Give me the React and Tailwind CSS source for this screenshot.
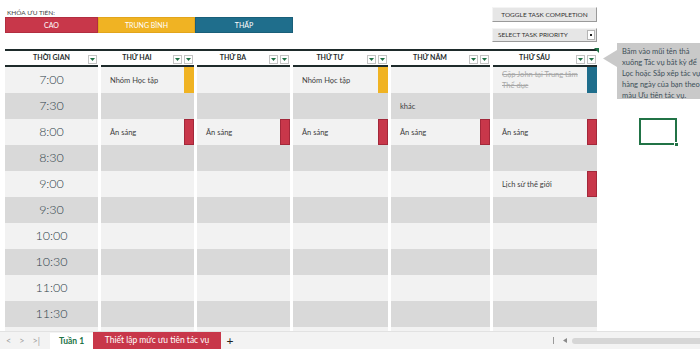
import React from 'react';

const RED = 'bg-[#c8374a]';
const YELLOW = 'bg-[#f0b323]';
const TEAL = 'bg-[#1f6e8c]';

const times = ['7:00', '7:30', '8:00', '8:30', '9:00', '9:30', '10:00', '10:30', '11:00', '11:30'];

const days = [
  { label: 'THỨ HAI', w: 'w-[93px]' },
  { label: 'THỨ BA', w: 'w-[93px]' },
  { label: 'THỨ TƯ', w: 'w-[95px]' },
  { label: 'THỨ NĂM', w: 'w-[99px]' },
  { label: 'THỨ SÁU', w: 'w-[104px]' },
];

// row-day -> task
const tasks = {
  '0-0': { text: 'Nhóm Học tập', bar: YELLOW },
  '0-2': { text: 'Nhóm Học tập', bar: YELLOW },
  '0-4': { text: 'Gặp John tại Trung tâm\nThể dục', bar: TEAL, done: true },
  '1-3': { text: 'khác' },
  '2-0': { text: 'Ăn sáng', bar: RED },
  '2-1': { text: 'Ăn sáng', bar: RED },
  '2-2': { text: 'Ăn sáng', bar: RED },
  '2-3': { text: 'Ăn sáng', bar: RED },
  '2-4': { text: 'Ăn sáng', bar: RED },
  '4-4': { text: 'Lịch sử thế giới', bar: RED },
};

const FilterBox = () => (
  <span className="flex h-[9px] w-[9px] items-center justify-center border border-[#c4c4c4] bg-white">
    <svg width="5" height="3" viewBox="0 0 5 3">
      <path d="M0 0h5L2.5 3z" fill="#1e7145" />
    </svg>
  </span>
);

const HeaderCell = ({ label, w, filters = 2, padLeft }) => (
  <div className={`${w} flex h-[16px] items-end border-b-2 border-[#1e2b2b] pb-[1px]`}>
    <span className={`flex-1 self-center text-center text-[7px] font-bold text-[#1e2b2b] ${padLeft ? 'pl-[10px]' : ''}`}>
      {label}
    </span>
    <div className="flex gap-[2px] pr-[1px]">
      {Array.from({ length: filters }).map((_, i) => (
        <FilterBox key={i} />
      ))}
    </div>
  </div>
);

const DayCell = ({ task }) => (
  <div className="flex h-full w-full">
    <div className="flex flex-1 items-center pl-[9px]">
      {task && (
        <span
          className={`whitespace-pre-line text-[7.5px] leading-[11px] ${
            task.done ? 'text-[#a8a8a8] line-through' : 'text-[#404040]'
          }`}
        >
          {task.text}
        </span>
      )}
    </div>
    {task && task.bar && (
      <div className={`h-full w-[10px] ${task.bar} ${task.bar === RED ? 'border border-[#a3283a]' : ''}`} />
    )}
  </div>
);

const Planner = () => (
  <div className="flex w-[597px] flex-col pl-[5px]">
    {/* top area */}
    <div className="flex h-[49px] justify-between">
      <div className="pt-[8px]">
        <div className="h-[9px] pl-[2px] text-[6.5px] leading-[9px] text-[#444]">KHÓA ƯU TIÊN:</div>
        <div className="flex h-[16px] w-[288px] text-[7px] text-white">
          <div className={`flex w-[93px] items-center justify-center ${RED} border border-[#b22e40]`}>CAO</div>
          <div className={`flex w-[97px] items-center justify-center ${YELLOW} border border-[#e2a51c]`}>TRUNG BÌNH</div>
          <div className={`flex w-[98px] items-center justify-center ${TEAL} border border-[#1a5f79]`}>THẤP</div>
        </div>
      </div>
      <div className="flex flex-col gap-[6px] pt-[7px]">
        <div className="flex h-[15px] w-[105px] items-center justify-center border border-t-[#f4f4f4] border-l-[#f4f4f4] border-b-[#9a9a9a] border-r-[#9a9a9a] bg-[#e6e6e6] text-[6.5px] text-[#333]">
          TOGGLE TASK COMPLETION
        </div>
        <div className="flex h-[14px] w-[105px] items-center border border-t-[#f4f4f4] border-l-[#f4f4f4] border-b-[#9a9a9a] border-r-[#9a9a9a] bg-[#e6e6e6] pl-[5px] pr-[1px] text-[6.5px] text-[#333]">
          <span className="flex-1">SELECT TASK PRIORITY</span>
          <span className="flex h-[10px] w-[8px] items-center justify-center border border-[#b5b5b5] bg-white">
            <span className="h-[2px] w-[2px] bg-[#222]" />
          </span>
        </div>
      </div>
    </div>

    {/* table */}
    <div className="relative border-t-2 border-[#1e2b2b]">
      <svg className="absolute -right-[2px] -top-[3px]" width="5" height="5" viewBox="0 0 5 5">
        <path d="M0 0h5v5z" fill="#1e7145" />
      </svg>
      <div className="flex gap-[3px]">
        <HeaderCell label="THỜI GIAN" w="w-[93px]" filters={1} padLeft />
        {days.map((d) => (
          <HeaderCell key={d.label} label={d.label} w={d.w} />
        ))}
      </div>
      {times.map((t, r) => (
        <div key={t} className="flex h-[26px] gap-[3px]">
          <div
            className={`flex w-[93px] items-center justify-center text-[12.5px] font-light text-[#2f3f49] ${
              r % 2 === 0 ? 'bg-[#f2f2f2]' : 'bg-[#d9d9d9]'
            }`}
          >
            {t}
          </div>
          {days.map((d, c) => (
            <div key={d.label} className={`${d.w} ${r % 2 === 0 ? 'bg-[#f2f2f2]' : 'bg-[#d9d9d9]'}`}>
              <DayCell task={tasks[`${r}-${c}`]} />
            </div>
          ))}
        </div>
      ))}
      <div className="flex h-[4px] gap-[3px]">
        <div className="w-[93px] bg-[#f2f2f2]" />
        {days.map((d) => (
          <div key={d.label} className={`${d.w} bg-[#f2f2f2]`} />
        ))}
      </div>
    </div>
  </div>
);

const SideNotes = () => (
  <div className="flex flex-1 flex-col pt-[43px]">
    <div className="flex">
      <svg className="mt-[7px] ml-[6px] shrink-0" width="14" height="17" viewBox="0 0 14 17">
        <path d="M14 0L0 8.5L14 17z" fill="#c9c9c9" />
      </svg>
      <div className="h-[56px] flex-1 overflow-hidden whitespace-nowrap bg-[#c9c9c9] pl-[5px] pt-[3px] text-[7.5px] leading-[11px] text-[#3d4f58]">
        Bấm vào mũi tên thả
        <br />
        xuống Tác vụ bất kỳ để
        <br />
        Lọc hoặc Sắp xếp tác vụ
        <br />
        hàng ngày của bạn theo
        <br />
        màu Ưu tiên tác vụ.
      </div>
    </div>
    <div className="relative ml-[42px] mt-[19px] h-[27px] w-[38px] border-2 border-[#217346]">
      <span className="absolute -bottom-[4px] -right-[4px] h-[5px] w-[5px] border border-white bg-[#217346]" />
    </div>
  </div>
);

const TabBar = () => (
  <div className="flex h-[18px] items-end border-t border-[#e2e2e2] bg-[#f3f3f3] text-[8.5px]">
    <div className="flex h-full w-[50px] items-center gap-[8px] pl-[6px] text-[9px] text-[#a0a0a0]">
      <span>&lt;</span>
      <span>&gt;</span>
      <span>&gt;|</span>
    </div>
    <div className="flex h-[16px] w-[43px] items-center justify-center bg-white font-bold text-[#217346]">Tuần 1</div>
    <div className="flex h-[17px] w-[128px] items-center justify-center bg-[#c8374a] text-white">
      Thiết lập mức ưu tiên tác vụ
    </div>
    <div className="flex h-full w-[18px] items-center justify-center text-[12px] text-[#222]">+</div>
    <div className="flex-1" />
    <div className="flex h-full items-center">
      <span className="h-[7px] w-px bg-[#9a9a9a]" />
      <svg className="ml-[9px]" width="4" height="5" viewBox="0 0 4 5">
        <path d="M4 0v5L0 2.5z" fill="#8a8a8a" />
      </svg>
      <span className="ml-[5px] h-[6px] w-[128px] rounded-l-full bg-[#d6d6d6]" />
    </div>
  </div>
);

export default function App() {
  return (
    <div className="flex h-[349px] w-[700px] flex-col overflow-hidden bg-white font-['Lato','Liberation_Sans',sans-serif]">
      <div className="flex h-[331px]">
        <Planner />
        <SideNotes />
      </div>
      <TabBar />
    </div>
  );
}
